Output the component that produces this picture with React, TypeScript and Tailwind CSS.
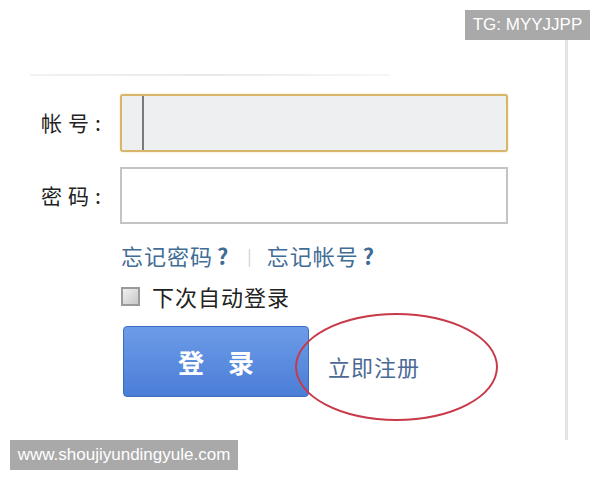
export default function App() {
  const cjk = { fontFamily: '"Noto Sans CJK SC", "Noto Sans", sans-serif' };
  const latin = { fontFamily: '"Liberation Sans", Arial, sans-serif' };

  return (
    <div className="relative w-[600px] h-[480px] bg-white overflow-hidden">
      <div
        className="absolute left-[465px] top-[10px] w-[125px] h-[30px] bg-[#a9a9a9] text-white text-[17px] flex items-center justify-center"
        style={latin}
      >
        TG: MYYJJPP
      </div>

      <div className="pt-[40px]">
        <div className="flex flex-col w-[568px] h-[400px] border-r-[3px] border-[#e4e4e4]" style={cjk}>
          <div className="ml-[30px] mt-[34px] w-[360px] h-[2px] bg-gradient-to-r from-[#f2f2f2] via-[#e9e9e9] to-[#f7f7f7]" />

          <div className="mt-[18px] flex items-center">
            <div className="w-[120px] pl-[41px] text-[21px] text-[#222] tracking-[6px]">帐号:</div>
            <div className="w-[388px] h-[58px] rounded-[3px] border-2 border-[#d8b56c] bg-[#eeeff0] shadow-[0_0_2px_#f0d9a0] pl-[20px]">
              <div className="w-[2px] h-full bg-[#7a7a7a]" />
            </div>
          </div>

          <div className="mt-[15px] flex items-center">
            <div className="w-[120px] pl-[41px] text-[21px] text-[#222] tracking-[6px]">密码:</div>
            <div className="w-[388px] h-[57px] border-2 border-[#c4c4c4] bg-white" />
          </div>

          <div className="mt-[16px] ml-[121px] flex items-center h-[30px] text-[22px] text-[#3f6d96] tracking-[1px]">
            <span>忘记密码</span>
            <span className="ml-[4px] font-bold">?</span>
            <span className="ml-[18px] mr-[14px] text-[16px] text-[#cfcfcf]">|</span>
            <span>忘记帐号</span>
            <span className="ml-[4px] font-bold">?</span>
          </div>

          <div className="mt-[12px] ml-[121px] flex items-center h-[28px]">
            <div className="w-[19px] h-[19px] border-2 border-[#9a9a9a] bg-gradient-to-br from-[#f0f0f0] to-[#c8c8c8] mr-[12px]" />
            <span className="text-[22px] text-[#222] tracking-[1px]">下次自动登录</span>
          </div>

          <div className="relative mt-[16px] ml-[123px] flex items-center">
            <div className="w-[186px] h-[71px] rounded-[4px] border border-[#3d6cc0] bg-gradient-to-b from-[#6c9ce8] to-[#4a7dd6] flex items-center justify-center text-white text-[26px] font-bold tracking-[24px] pl-[24px]">
              登录
            </div>
            <div className="ml-[19px] pt-[10px] text-[22px] text-[#4b6a95] tracking-[1px]">立即注册</div>
            <div className="absolute left-[172px] top-[-13px] w-[203px] h-[108px] rounded-[50%] border-2 border-[#c83a4a]" />
          </div>
        </div>
      </div>

      <div
        className="absolute left-[10px] top-[440px] w-[228px] h-[30px] bg-[#a9a9a9] text-white text-[17px] flex items-center justify-center"
        style={latin}
      >
        www.shoujiyundingyule.com
      </div>
    </div>
  );
}
